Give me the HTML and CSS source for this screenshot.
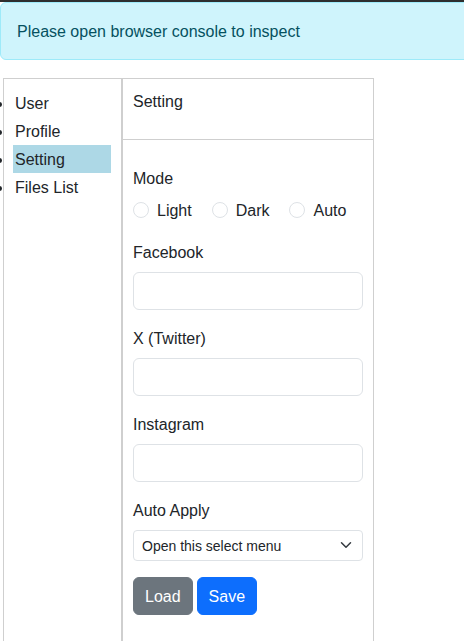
FILE: index.html
```html
<!DOCTYPE html>
<html lang="en">
<head>
<meta charset="utf-8">
<title>Setting</title>
<link rel="stylesheet" href="styles.css">
</head>
<body>
<div class="topbar"></div>
<div class="alert">Please open browser console to inspect</div>
<div class="layout">
  <nav class="sidebar">
    <ul class="menu">
      <li class="menu-item">User</li>
      <li class="menu-item">Profile</li>
      <li class="menu-item active">Setting</li>
      <li class="menu-item">Files List</li>
    </ul>
  </nav>
  <section class="panel">
    <div class="panel-header">Setting</div>
    <form class="panel-body">
      <div class="group group-radio">
        <label class="label">Mode</label>
        <div class="radios">
          <label class="check"><input class="radio" type="radio" name="mode"><span>Light</span></label>
          <label class="check"><input class="radio" type="radio" name="mode"><span>Dark</span></label>
          <label class="check"><input class="radio" type="radio" name="mode"><span>Auto</span></label>
        </div>
      </div>
      <div class="group">
        <label class="label">Facebook</label>
        <input class="control" type="text">
      </div>
      <div class="group">
        <label class="label">X (Twitter)</label>
        <input class="control" type="text">
      </div>
      <div class="group">
        <label class="label">Instagram</label>
        <input class="control" type="text">
      </div>
      <div class="group">
        <label class="label">Auto Apply</label>
        <div class="select-wrap">
          <select class="select">
            <option>Open this select menu</option>
          </select>
          <svg class="chevron" viewBox="0 0 16 16" width="16" height="12" aria-hidden="true"><path d="m2 5 6 6 6-6" fill="none" stroke="#343a40" stroke-width="2" stroke-linecap="round" stroke-linejoin="round"/></svg>
        </div>
      </div>
      <div class="actions">
        <button type="button" class="btn btn-secondary">Load</button>
        <button type="button" class="btn btn-primary">Save</button>
      </div>
    </form>
  </section>
</div>
</body>
</html>
```
FILE: styles.css
```css
html, body {
  margin: 0;
  height: 100%;
  overflow: hidden;
}
body {
  font-family: "Liberation Sans", Arial, sans-serif;
  font-size: 16px;
  line-height: 1.5;
  color: #212529;
  background: #fff;
}
.topbar {
  height: 2px;
  background: #2e2e2e;
}
.alert {
  width: 520px;
  box-sizing: border-box;
  padding: 17px 16px 15px;
  border: 1px solid #9eeaf9;
  border-radius: 6px;
  background: #cff4fc;
  color: #055160;
}
.layout {
  display: flex;
  align-items: stretch;
  margin-top: 18px;
  padding-left: 3px;
  min-height: 620px;
}
.sidebar {
  width: 119px;
  box-sizing: border-box;
  border: 1px solid #cfcfcf;
  padding: 10px 10px 10px 9px;
}
.menu {
  margin: 0;
  padding: 0;
  list-style: disc outside;
}
.menu-item {
  padding: 3px 2px 1px;
  line-height: 24px;
}
.menu-item.active {
  background: #add8e6;
}
.panel {
  width: 252px;
  box-sizing: border-box;
  border: 1px solid #cfcfcf;
}
.panel-header {
  height: 61px;
  box-sizing: border-box;
  padding: 11px 10px 10px;
  border-bottom: 1px solid #cfcfcf;
}
.panel-body {
  margin: 0;
  padding: 26px 10px 10px;
}
.group {
  margin-bottom: 16px;
}
.group-radio {
  margin-bottom: 18px;
}
.label {
  display: block;
  box-sizing: border-box;
  padding-top: 1px;
  height: 24px;
  margin-bottom: 8px;
}
.radios {
  display: flex;
  flex-wrap: nowrap;
  height: 24px;
}
.check {
  display: flex;
  align-items: center;
  margin-right: 20px;
  height: 24px;
  white-space: nowrap;
}
.check span {
  padding-top: 1px;
}
.radio {
  appearance: none;
  -webkit-appearance: none;
  flex: none;
  width: 16px;
  height: 16px;
  margin: 0 8px 0 0;
  border: 1px solid #dee2e6;
  border-radius: 50%;
  background: #fff;
  box-sizing: border-box;
}
.control {
  display: block;
  width: 100%;
  height: 38px;
  box-sizing: border-box;
  padding: 6px 12px;
  border: 1px solid #dee2e6;
  border-radius: 6px;
  font: inherit;
  background: #fff;
}
.select-wrap {
  position: relative;
}
.select {
  display: block;
  width: 100%;
  height: 31px;
  box-sizing: border-box;
  padding: 5px 36px 3px 8px;
  border: 1px solid #dee2e6;
  border-radius: 4px;
  font-family: inherit;
  font-size: 14px;
  line-height: 1.5;
  color: #212529;
  background: #fff;
  appearance: none;
  -webkit-appearance: none;
}
.chevron {
  position: absolute;
  right: 9px;
  top: 9px;
  pointer-events: none;
}
.actions {
  display: flex;
  gap: 4px;
}
.btn {
  font: inherit;
  line-height: 24px;
  padding: 7px 11px 5px;
  border: 1px solid transparent;
  border-radius: 6px;
  color: #fff;
}
.btn-secondary {
  background: #6c757d;
  border-color: #6c757d;
}
.btn-primary {
  background: #0d6efd;
  border-color: #0d6efd;
}
```
